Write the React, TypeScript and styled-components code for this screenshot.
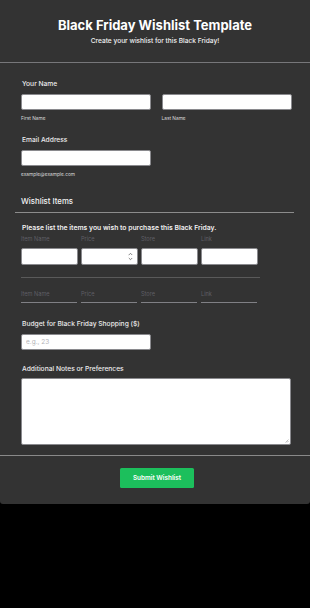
import React from "react";
import styled, { createGlobalStyle } from "styled-components";

const Global = createGlobalStyle`
  html, body { margin: 0; padding: 0; background: #000; }
  body { font-family: Inter, "Noto Sans", sans-serif; }
  * { box-sizing: border-box; }
`;

const Page = styled.div`
  width: 310px;
  background: #333333;
  border-radius: 0 0 3px 3px;
  padding-bottom: 16px;
`;

const Header = styled.header`
  padding: 16px 0 16px;
  text-align: center;
  border-bottom: 1px solid #77777a;
`;

const Title = styled.h1`
  margin: 0;
  font-size: 13px;
  line-height: 18px;
  font-weight: 700;
  color: #ffffff;
`;

const Subtitle = styled.p`
  margin: 2px 0 0;
  font-size: 6.6px;
  line-height: 10px;
  font-weight: 500;
  color: #f2f2f2;
`;

const Form = styled.form`
  padding: 0 18px 0 21px;
  display: flex;
  flex-direction: column;
`;

const Label = styled.div<{ $top: number }>`
  margin-top: ${(p) => p.$top}px;
  font-size: 6.7px;
  line-height: 10px;
  font-weight: 500;
  color: #ececec;
  padding-left: 1px;
`;

const Row = styled.div`
  display: grid;
  grid-template-columns: 130px 130px;
  column-gap: 10.5px;
  margin-top: 5px;
`;

const Field = styled.div`
  display: flex;
  flex-direction: column;
`;

const Input = styled.input<{ $w?: number; $top?: number }>`
  width: ${(p) => (p.$w ? `${p.$w}px` : "100%")};
  height: 16px;
  margin-top: ${(p) => p.$top ?? 0}px;
  background: #ffffff;
  border: 1px solid #8a8a8e;
  border-radius: 2px;
  padding: 0 4px;
  font-family: inherit;
  font-size: 6.5px;
  color: #333;
  outline: none;
  &::placeholder { color: #b4b4b8; }
`;

const SubLabel = styled.div<{ $top?: number }>`
  margin-top: ${(p) => p.$top ?? 5}px;
  font-size: 4.8px;
  line-height: 7px;
  color: #d8d8d8;
`;

const SectionTitle = styled.h2`
  margin: 18px 0 0;
  font-size: 7.8px;
  line-height: 11px;
  font-weight: 500;
  color: #f4f4f4;
`;

const SectionRule = styled.hr`
  margin: 5px -2px 0 -6px;
  border: 0;
  border-top: 1px solid #8c8c8c;
`;

const Intro = styled.div`
  margin-top: 10px;
  padding-left: 1px;
  font-size: 6.8px;
  line-height: 9px;
  font-weight: 600;
  color: #f0f0f0;
`;

const ItemGrid = styled.div<{ $top: number }>`
  display: grid;
  grid-template-columns: repeat(4, 56.5px);
  column-gap: 3.5px;
  margin-top: ${(p) => p.$top}px;
`;

const ColHead = styled.div`
  font-size: 5.6px;
  line-height: 7px;
  color: #5f5f66;
`;

const ItemInput = styled.div`
  position: relative;
  height: 17px;
  background: #fff;
  border: 1px solid #8a8a8e;
  border-radius: 2px;
`;

const Spinner = styled.svg`
  position: absolute;
  right: 4px;
  top: 3px;
`;

const Underline = styled.div`
  height: 5px;
  border-bottom: 1px solid #808085;
  margin-right: 1px;
`;

const ItemRule = styled.hr`
  width: 239px;
  margin: 12px 0 0;
  border: 0;
  border-top: 1px solid #5a5a5a;
`;

const TextArea = styled.div`
  position: relative;
  margin-top: 4px;
  width: 270px;
  height: 67px;
  background: #fff;
  border: 1px solid #8a8a8e;
  border-radius: 2px;
`;

const Grip = styled.svg`
  position: absolute;
  right: 1px;
  bottom: 1px;
`;

const Footer = styled.div`
  margin-top: 10px;
  border-top: 1px solid #8a8a8a;
  display: flex;
  justify-content: center;
  padding: 12px 0 0 4px;
`;

const Submit = styled.button`
  width: 74px;
  height: 20px;
  background: #1cbf5c;
  border: 0;
  border-radius: 1.5px;
  color: #fff;
  font-family: inherit;
  font-size: 6.4px;
  font-weight: 600;
  cursor: pointer;
`;

const cols = ["Item Name", "Price", "Store", "Link"];

export default function App() {
  return (
    <>
      <Global />
      <Page>
        <Header>
          <Title>Black Friday Wishlist Template</Title>
          <Subtitle>Create your wishlist for this Black Friday!</Subtitle>
        </Header>
        <Form onSubmit={(e) => e.preventDefault()}>
          <Label $top={16}>Your Name</Label>
          <Row>
            <Field>
              <Input />
              <SubLabel>First Name</SubLabel>
            </Field>
            <Field>
              <Input />
              <SubLabel>Last Name</SubLabel>
            </Field>
          </Row>

          <Label $top={13}>Email Address</Label>
          <Input $w={130} $top={5} />
          <SubLabel>example@example.com</SubLabel>

          <SectionTitle>Wishlist Items</SectionTitle>
          <SectionRule />

          <Intro>Please list the items you wish to purchase this Black Friday.</Intro>
          <ItemGrid $top={4}>
            {cols.map((c) => (
              <ColHead key={c}>{c}</ColHead>
            ))}
          </ItemGrid>
          <ItemGrid $top={5}>
            {cols.map((c) => (
              <ItemInput key={c}>
                {c === "Price" && (
                  <Spinner width="5" height="9" viewBox="0 0 5 9">
                    <path d="M0.8 3 L2.5 1.3 L4.2 3" stroke="#666" strokeWidth="0.8" fill="none" />
                    <path d="M0.8 6 L2.5 7.7 L4.2 6" stroke="#666" strokeWidth="0.8" fill="none" />
                  </Spinner>
                )}
              </ItemInput>
            ))}
          </ItemGrid>
          <ItemRule />
          <ItemGrid $top={13}>
            {cols.map((c) => (
              <ColHead key={c}>{c}</ColHead>
            ))}
          </ItemGrid>
          <ItemGrid $top={0}>
            {cols.map((c) => (
              <Underline key={c} />
            ))}
          </ItemGrid>

          <Label $top={16}>Budget for Black Friday Shopping ($)</Label>
          <Input $w={130} $top={5} placeholder="e.g., 23" />

          <Label $top={14}>Additional Notes or Preferences</Label>
          <TextArea>
            <Grip width="4" height="4" viewBox="0 0 4 4">
              <path d="M3.5 0.5 L0.5 3.5 M3.5 2 L2 3.5" stroke="#999" strokeWidth="0.6" />
            </Grip>
          </TextArea>
        </Form>
        <Footer>
          <Submit type="button">Submit Wishlist</Submit>
        </Footer>
      </Page>
    </>
  );
}
